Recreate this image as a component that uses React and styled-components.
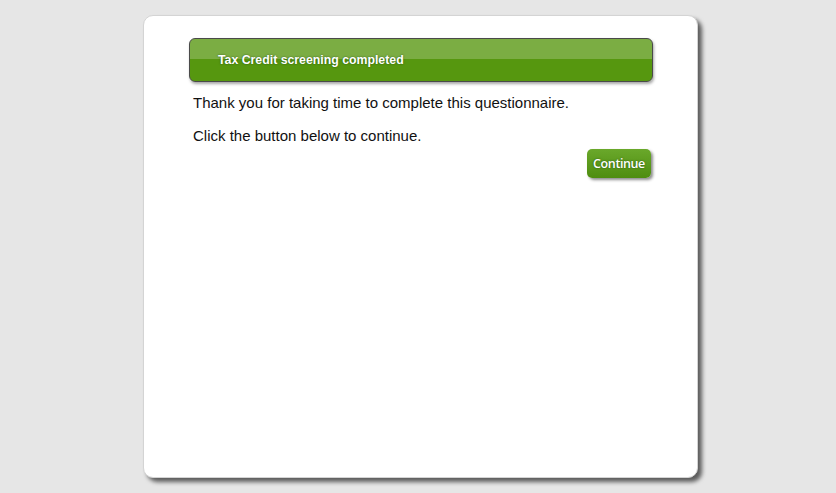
import React from 'react'
import styled, { createGlobalStyle } from 'styled-components'

const GlobalStyle = createGlobalStyle`
  html, body {
    margin: 0;
    padding: 0;
    background: #e6e6e6;
    font-family: "Liberation Sans", Arial, sans-serif;
  }
`

const Page = styled.div`
  width: 836px;
  height: 493px;
  display: flex;
  justify-content: center;
  align-items: flex-start;
  padding: 15px 0 0 5px;
  box-sizing: border-box;
  overflow: hidden;
`

const Card = styled.div`
  width: 555px;
  height: 463px;
  box-sizing: border-box;
  background: #fff;
  border: 1px solid #d4d4d4;
  border-radius: 10px;
  box-shadow: 4px 4px 4px rgba(0, 0, 0, 0.6);
  padding: 22px 44px 0 45px;
  display: flex;
  flex-direction: column;
`

const HeaderBar = styled.div`
  height: 44px;
  box-sizing: border-box;
  border: 1px solid #4a4a4a;
  border-radius: 6px;
  background: linear-gradient(to bottom, #7bad43 0%, #7bad43 48%, #56970f 48%, #56970f 100%);
  box-shadow: 1px 2px 3px rgba(0, 0, 0, 0.35);
  display: flex;
  align-items: center;
  padding: 0 0 0 28px;
`

const HeaderTitle = styled.span`
  color: #fff;
  font-size: 12.3px;
  font-weight: bold;
  text-shadow: 0 0 2px rgba(0, 40, 0, 0.6);
  position: relative;
  top: 0;
`

const Body = styled.div`
  padding: 12px 2px 0 4px;
  display: flex;
  flex-direction: column;
`

const Line = styled.p`
  margin: 0 0 15px;
  font-size: 15px;
  line-height: 18px;
  color: #111;
`

const Actions = styled.div`
  display: flex;
  justify-content: flex-end;
  margin-top: -11px;
`

const ContinueButton = styled.button`
  width: 64px;
  height: 29px;
  border: none;
  border-radius: 5px;
  background: linear-gradient(to bottom, #6aa82b, #4e8d0f);
  box-shadow: 2px 2px 3px rgba(0, 0, 0, 0.45);
  color: #fff;
  font-family: "Open Sans", "Liberation Sans", sans-serif;
  font-size: 12.5px;
  font-weight: 600;
  letter-spacing: -0.4px;
  text-shadow: 0 0 2px rgba(0, 40, 0, 0.6);
  padding: 0;
  cursor: pointer;
`

const App = () => {
  return (
    <>
      <GlobalStyle />
      <Page>
        <Card>
          <HeaderBar>
            <HeaderTitle>Tax Credit screening completed</HeaderTitle>
          </HeaderBar>
          <Body>
            <Line>Thank you for taking time to complete this questionnaire.</Line>
            <Line>Click the button below to continue.</Line>
            <Actions>
              <ContinueButton>Continue</ContinueButton>
            </Actions>
          </Body>
        </Card>
      </Page>
    </>
  )
}

export default App
